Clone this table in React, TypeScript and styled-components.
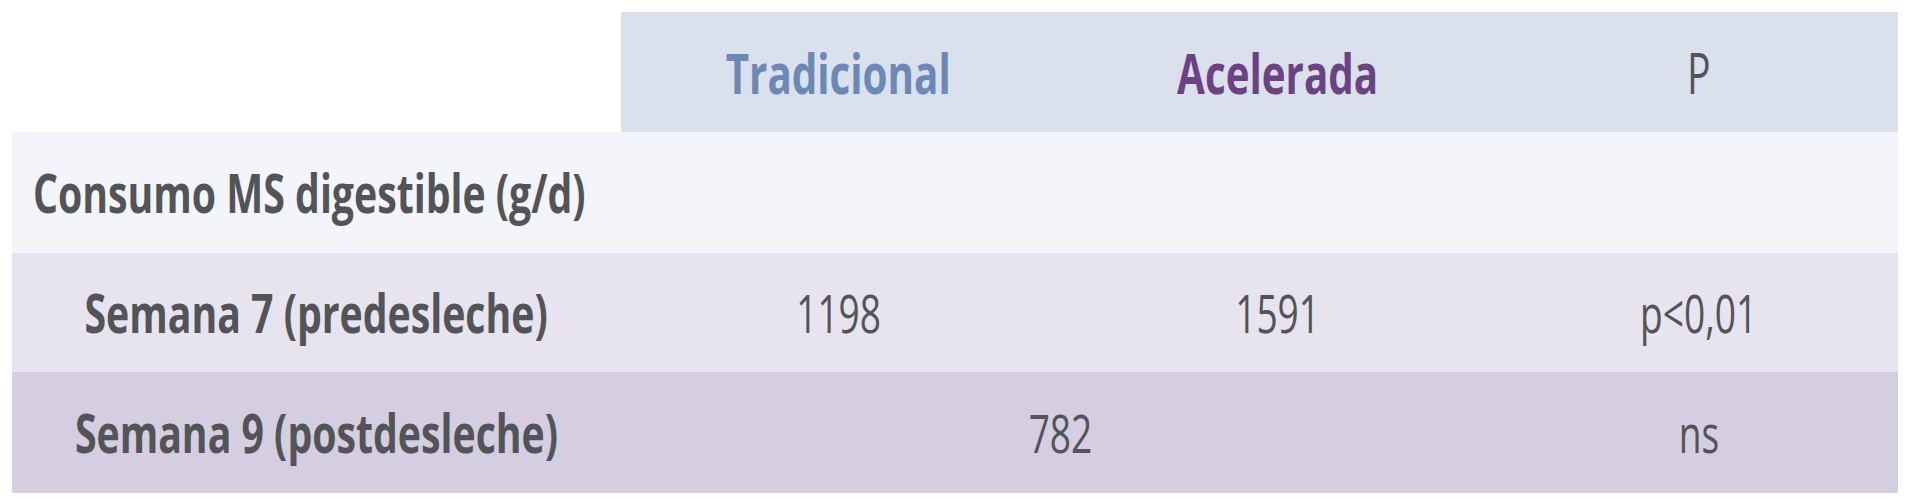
import { createGlobalStyle, styled } from "styled-components";

const GlobalStyle = createGlobalStyle`
  html, body {
    margin: 0;
    padding: 0;
    background: #ffffff;
  }
  body {
    font-family: "Open Sans", "Noto Sans", "Liberation Sans", sans-serif;
    color: #525457;
  }
`;

const Page = styled.div`
  padding: 12px 16px 0 12px;
`;

const Table = styled.div`
  display: grid;
  grid-template-columns: 609px 435px 444px 398px;
  grid-template-rows: 120px 121px 119px 121px;
`;

type Tone = "head" | "group" | "light" | "dark" | "blank";

const tones: Record<Tone, string> = {
  blank: "transparent",
  head: "#dae0ec",
  group: "#f4f5fa",
  light: "#e7e4ef",
  dark: "#d5cde0",
};

const Cell = styled.div<{ $tone: Tone; $span?: number; $align?: "left" | "center" }>`
  background: ${(p) => tones[p.$tone]};
  grid-column: span ${(p) => p.$span ?? 1};
  display: flex;
  align-items: center;
  justify-content: ${(p) => (p.$align === "left" ? "flex-start" : "center")};
  padding: ${(p) => (p.$align === "left" ? "0 0 0 21px" : "0")};
  font-size: 53px;
  white-space: nowrap;
`;

/* the source face is a condensed humanist sans, so squeeze the text */
const Squeezed = styled.span<{ $bold?: boolean; $left?: boolean }>`
  display: inline-block;
  font-weight: ${(p) => (p.$bold ? 700 : 400)};
  transform: scaleX(${(p) => (p.$bold ? 0.74 : 0.7)});
  transform-origin: ${(p) => (p.$left ? "left center" : "center")};
`;

const HeadText = styled(Squeezed)<{ $color: string }>`
  color: ${(p) => p.$color};
  font-size: 56px;
  transform: scaleX(${(p) => (p.$bold ? 0.72 : 0.7)});
`;

export default function App() {
  return (
    <>
      <GlobalStyle />
      <Page>
        <Table>
          <Cell $tone="blank" />
          <Cell $tone="head">
            <HeadText $color="#6b88b6" $bold>Tradicional</HeadText>
          </Cell>
          <Cell $tone="head">
            <HeadText $color="#6b4283" $bold>Acelerada</HeadText>
          </Cell>
          <Cell $tone="head">
            <HeadText $color="#525457">P</HeadText>
          </Cell>

          <Cell $tone="group" $span={4} $align="left">
            <Squeezed $bold $left>Consumo MS digestible (g/d)</Squeezed>
          </Cell>

          <Cell $tone="light">
            <Squeezed $bold>Semana 7 (predesleche)</Squeezed>
          </Cell>
          <Cell $tone="light">
            <Squeezed>1198</Squeezed>
          </Cell>
          <Cell $tone="light">
            <Squeezed>1591</Squeezed>
          </Cell>
          <Cell $tone="light">
            <Squeezed>p&lt;0,01</Squeezed>
          </Cell>

          <Cell $tone="dark">
            <Squeezed $bold>Semana 9 (postdesleche)</Squeezed>
          </Cell>
          <Cell $tone="dark" $span={2}>
            <Squeezed>782</Squeezed>
          </Cell>
          <Cell $tone="dark">
            <Squeezed>ns</Squeezed>
          </Cell>
        </Table>
      </Page>
    </>
  );
}
